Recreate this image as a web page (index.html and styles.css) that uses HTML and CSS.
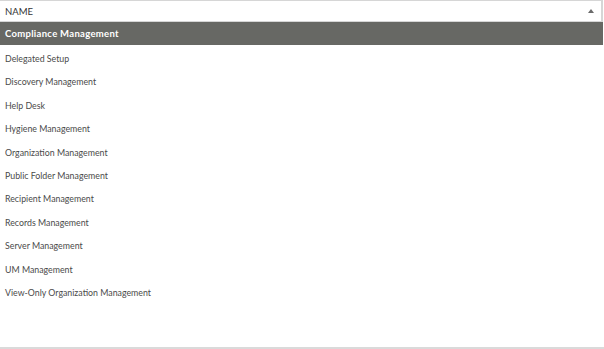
FILE: index.html
```html
<!DOCTYPE html>
<html>

<head>
  <meta name="viewport" content="width=device-width, initial-scale=1">
  <link rel="stylesheet" href="styles.css">
</head>

<body>
  <div class="grid">
    <!-- Column header -->
    <div class="grid-head">
      <span class="col-name">NAME</span>
      <span class="sort-up"></span>
    </div>

    <ul class="rows">
      <li class="selected">Compliance Management</li>
      <li>Delegated Setup</li>
      <li>Discovery Management</li>
      <li>Help Desk</li>
      <li>Hygiene Management</li>
      <li>Organization Management</li>
      <li>Public Folder Management</li>
      <li>Recipient Management</li>
      <li>Records Management</li>
      <li>Server Management</li>
      <li>UM Management</li>
      <li>View-Only Organization Management</li>
    </ul>
  </div>
</body>

</html>
```

FILE: styles.css
```css
* {
  box-sizing: border-box;
}

body {
  margin: 0;
  font-family: Lato, "Open Sans", sans-serif;
  background-color: white;
  color: #444;
}

.grid {
  width: 604px;
  height: 349px;
  display: flex;
  flex-direction: column;
  border-bottom: 2px solid #dadada;
}

/* Header row */
.grid-head {
  height: 22px;
  display: flex;
  align-items: center;
  justify-content: space-between;
  padding: 0 7px 0 5px;
  border: 1px solid #d6d6d6;
  border-left: none;
  border-right-width: 2px;
  margin-right: 1px;
}

.col-name {
  font-size: 9.5px;
  color: #333;
}

/* Small sort arrow */
.sort-up {
  width: 0;
  height: 0;
  border-left: 3px solid transparent;
  border-right: 3px solid transparent;
  border-bottom: 4px solid #6a6a6a;
}

.rows {
  list-style: none;
  margin: 0;
  padding: 0;
  flex: 1;
}

.rows li {
  height: 23.4px;
  line-height: 23.4px;
  padding-left: 5px;
  font-size: 8.8px;
  color: #4a4a4a;
}

/* Highlighted row */
.rows li.selected {
  height: 23px;
  line-height: 23px;
  margin: 0 1px 2px 0;
  background-color: #676864;
  color: white;
  font-size: 9.5px;
  font-weight: bold;
  letter-spacing: 0.3px;
}
```
